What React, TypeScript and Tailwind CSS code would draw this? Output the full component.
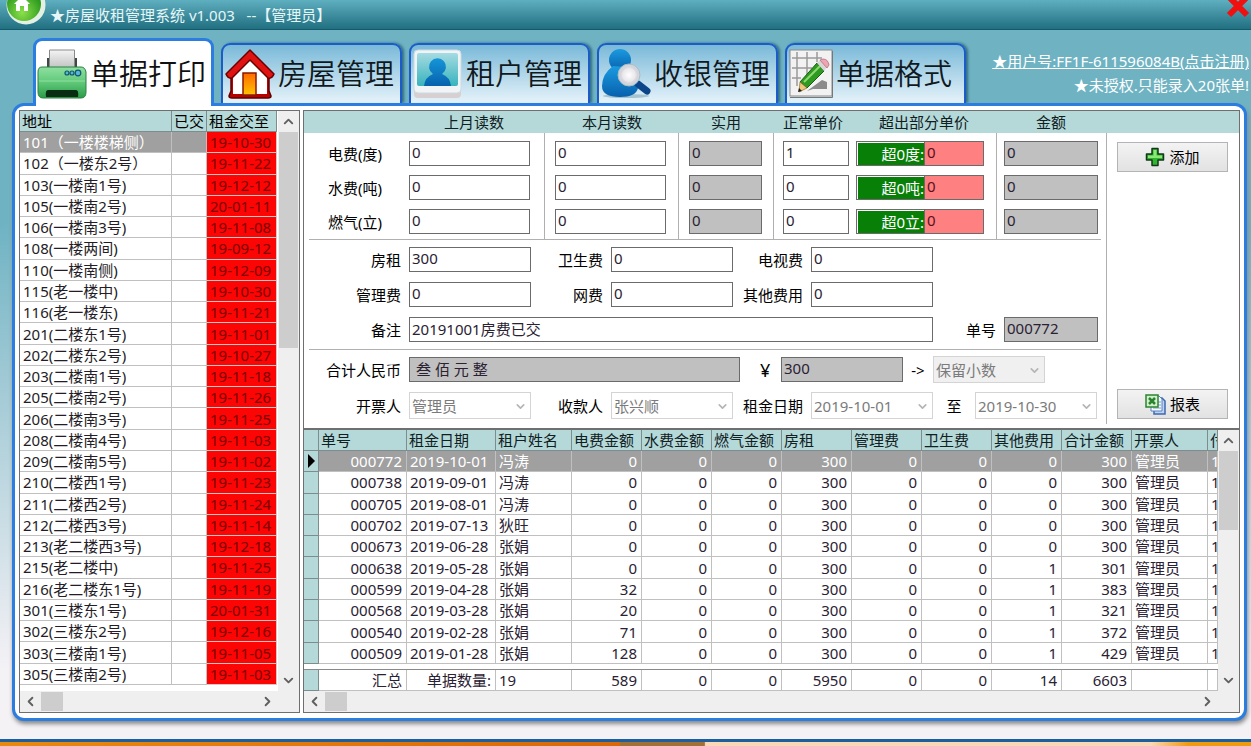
import React from "react";
import { ChevronDown, ChevronLeft, ChevronRight, ChevronUp } from "lucide-react";

const FIELD =
  "h-[25px] border border-[#6b6b6b] px-[2px] pb-[3px] text-[15px] leading-5 outline-none min-w-0";
const WHITE = FIELD + " bg-white text-[#2a2233]";
const GREY = FIELD + " bg-[#c0c0c0] text-[#2a2233]";
const PINK = FIELD + " bg-[#ff8080] text-[#5a1020]";

const rooms: [string, string][] = [
  ["101（一楼楼梯侧）", "19-10-30"],
  ["102（一楼东2号）", "19-11-22"],
  ["103(一楼南1号)", "19-12-12"],
  ["105(一楼南2号)", "20-01-11"],
  ["106(一楼南3号)", "19-11-08"],
  ["108(一楼两间)", "19-09-12"],
  ["110(一楼南侧)", "19-12-09"],
  ["115(老一楼中)", "19-10-30"],
  ["116(老一楼东)", "19-11-21"],
  ["201(二楼东1号)", "19-11-01"],
  ["202(二楼东2号)", "19-10-27"],
  ["203(二楼南1号)", "19-11-18"],
  ["205(二楼南2号)", "19-11-26"],
  ["206(二楼南3号)", "19-11-25"],
  ["208(二楼南4号)", "19-11-03"],
  ["209(二楼南5号)", "19-11-02"],
  ["210(二楼西1号)", "19-11-23"],
  ["211(二楼西2号)", "19-11-24"],
  ["212(二楼西3号)", "19-11-14"],
  ["213(老二楼西3号)", "19-12-18"],
  ["215(老二楼中)", "19-11-25"],
  ["216(老二楼东1号)", "19-11-19"],
  ["301(三楼东1号)", "20-01-31"],
  ["302(三楼东2号)", "19-12-16"],
  ["303(三楼南1号)", "19-11-05"],
  ["305(三楼南2号)", "19-11-03"],
];

const bills: [string, string, string, string, string, string][] = [
  ["000772", "2019-10-01", "冯涛", "0", "0", "300"],
  ["000738", "2019-09-01", "冯涛", "0", "0", "300"],
  ["000705", "2019-08-01", "冯涛", "0", "0", "300"],
  ["000702", "2019-07-13", "狄旺", "0", "0", "300"],
  ["000673", "2019-06-28", "张娟", "0", "0", "300"],
  ["000638", "2019-05-28", "张娟", "0", "1", "301"],
  ["000599", "2019-04-28", "张娟", "32", "1", "383"],
  ["000568", "2019-03-28", "张娟", "20", "1", "321"],
  ["000540", "2019-02-28", "张娟", "71", "1", "372"],
  ["000509", "2019-01-28", "张娟", "128", "1", "429"],
];

const billColumns = [
  "单号", "租金日期", "租户姓名", "电费金额", "水费金额", "燃气金额", "房租",
  "管理费", "卫生费", "其他费用", "合计金额", "开票人", "付款",
];

function PrinterIcon() {
  return (
    <svg width="50" height="50" viewBox="0 0 50 50" aria-hidden="true">
      <defs>
        <linearGradient id="pr-body" x1="0" y1="0" x2="0" y2="1">
          <stop offset="0" stopColor="#8fe0a0" />
          <stop offset=".5" stopColor="#5fc878" />
          <stop offset="1" stopColor="#2a9c48" />
        </linearGradient>
        <linearGradient id="pr-paper" x1="0" y1="0" x2="0" y2="1">
          <stop offset="0" stopColor="#f4f4f4" />
          <stop offset="1" stopColor="#bdbdbd" />
        </linearGradient>
      </defs>
      <path d="M11 20V10h2M39 20V10h-2" fill="none" stroke="#3c4a42" strokeWidth="2" />
      <path d="M12.500 1h25v20h-25z" fill="url(#pr-paper)" stroke="#8a8a8a" />
      <path d="M5 18h39q4 0 5 5v20q0 6-5 6H6q-5 0-5-6V23q0-5 4-5z" fill="url(#pr-body)" stroke="#2b8044" />
      <path d="M2 32h46" fill="none" stroke="#8fe09f" strokeWidth="1" />
      <path d="M11 41h28q3 0 2 7H9q-1-7 2-7z" fill="#082d12" />
      <g fill="#54b7d8" stroke="#14566e" strokeWidth="1.2">
        <circle cx="30" cy="24" r="2" />
        <circle cx="35" cy="24" r="2" />
        <circle cx="41" cy="24" r="2.800" />
      </g>
    </svg>
  );
}

function HouseIcon() {
  return (
    <svg width="50" height="50" viewBox="0 0 50 50" aria-hidden="true">
      <defs>
        <linearGradient id="ho-door" x1="0" y1="0" x2="0" y2="1">
          <stop offset="0" stopColor="#ff6a00" />
          <stop offset="1" stopColor="#ffc400" />
        </linearGradient>
      </defs>
      <path d="M6 25v17l-2 5q0 2 3 2h36q3 0 3-2l-2-5V25L25 8z" fill="#b80000" stroke="#5e0000" strokeWidth="1.500" />
      <path d="M8 26v19h34V26L25 11z" fill="#fff" />
      <path d="M25 1L1 25q2 5 6 4L25 11l18 18q4 1 6-4z" fill="#e01212" stroke="#6a0000" strokeWidth="1.500" strokeLinejoin="round" />
      <path d="M18 46V24h13v22z" fill="url(#ho-door)" stroke="#8a1a00" strokeWidth="1.500" />
    </svg>
  );
}

function TenantIcon() {
  return (
    <svg width="50" height="50" viewBox="0 0 50 50" aria-hidden="true">
      <defs>
        <linearGradient id="te-bg" x1="0" y1="0" x2="0" y2="1">
          <stop offset="0" stopColor="#a6dbe2" />
          <stop offset="1" stopColor="#36b3bc" />
        </linearGradient>
        <linearGradient id="te-man" x1="0" y1="0" x2="0" y2="1">
          <stop offset="0" stopColor="#1695d8" />
          <stop offset="1" stopColor="#0562ad" />
        </linearGradient>
      </defs>
      <path d="M1 40h47v5q0 4-4 4H5q-4 0-4-4z" fill="#d8cfd0" />
      <rect x="1" y="1" width="47" height="43" rx="4" fill="#f1f4f6" stroke="#c9dbe2" />
      <rect x="4" y="4" width="41" height="33" rx="2" fill="url(#te-bg)" />
      <path d="M11 37q1-9 9-12a8.500 8.500 0 1 1 9 0q8 3 9 12z" fill="url(#te-man)" />
    </svg>
  );
}

function CashierIcon() {
  return (
    <svg width="50" height="50" viewBox="0 0 50 50" aria-hidden="true">
      <defs>
        <linearGradient id="ca-man" x1="0" y1="0" x2="0" y2="1">
          <stop offset="0" stopColor="#1a9be0" />
          <stop offset="1" stopColor="#0860ad" />
        </linearGradient>
        <radialGradient id="ca-lens">
          <stop offset="0" stopColor="#fff" />
          <stop offset="1" stopColor="#e4e4ea" />
        </radialGradient>
      </defs>
      <ellipse cx="25" cy="47" rx="23" ry="2" fill="#a4c4d0" />
      <circle cx="19" cy="11" r="11" fill="url(#ca-man)" />
      <path d="M12 17Q1 25 1 37q0 11 18 11 16 0 18-9L25 18z" fill="url(#ca-man)" />
      <path d="M37 35l9 7" stroke="#0b458a" strokeWidth="7" strokeLinecap="round" />
      <circle cx="28" cy="26" r="11" fill="#cfd6de" stroke="#aebbc4" />
      <circle cx="28" cy="26" r="7.500" fill="url(#ca-lens)" stroke="#e8d9d9" />
    </svg>
  );
}

function FormatIcon() {
  return (
    <svg width="44" height="50" viewBox="0 0 44 50" aria-hidden="true">
      <rect x="1" y="1" width="42" height="46" fill="#f2f2f2" stroke="#8a8a8a" />
      <path d="M1 48.500h42.500V2" fill="none" stroke="#777" />
      <path d="M8 3v34M18 3v26M28 3v10M3 9h30M3 19h20M3 29h9" stroke="#9a9a9a" strokeWidth="1.500" />
      <path d="M18 42l15-11 5 2v7H24z" fill="#8b8b8b" />
      <path d="M11 33L28 14l7 8-17 17z" fill="#2f9a22" stroke="#1b5d12" />
      <path d="M15 33l16-16" stroke="#8ddb6e" strokeWidth="2" />
      <path d="M28 14l3-3 7 7-3 4z" fill="#d6d6d6" />
      <path d="M31 11l3-1q5 0 6 6l-2 3z" fill="#efa5b1" stroke="#b4707c" strokeWidth=".8" />
      <path d="M11 33l7 6-8 4z" fill="#eec77b" stroke="#8a6a2a" strokeWidth=".7" />
      <path d="M9 43l1-4 3 3z" fill="#222" />
    </svg>
  );
}

function HomeBadge() {
  return (
    <svg width="42" height="26" viewBox="0 0 42 26" aria-hidden="true">
      <defs>
        <radialGradient id="hb" cx=".45" cy=".75" r=".6">
          <stop offset="0" stopColor="#8de04a" />
          <stop offset="1" stopColor="#2c9a1e" />
        </radialGradient>
      </defs>
      <circle cx="20" cy="5" r="19.500" fill="#e4f0e4" />
      <circle cx="18" cy="4" r="17" fill="url(#hb)" />
      <path d="M8 4L16-4l8 8h-2v7h-4V6h-4v5h-4V4z" fill="#fff" />
    </svg>
  );
}

function PlusIcon() {
  return (
    <svg width="20" height="20" viewBox="0 0 20 20" aria-hidden="true">
      <path d="M7 1.500h6V7h5.500v6H13v5.500H7V13H1.500V7H7z" fill="#2fb52f" stroke="#14361a" strokeWidth="1.500" strokeLinejoin="round" />
      <path d="M8.500 3h3v5.500H17v2.500H3V8.500h5.500z" fill="#8bea75" />
    </svg>
  );
}

function SheetIcon() {
  return (
    <svg width="21" height="21" viewBox="0 0 21 21" aria-hidden="true">
      <path d="M9 4h8l3 3v13H9z" fill="#bcd3f6" stroke="#3f68ad" strokeWidth="1.500" />
      <path d="M6 2h8l3 3v12H6z" fill="#f6faff" stroke="#5a82be" />
      <path d="M13 8h3M13 11h3M8 14h8" stroke="#7b9ed6" />
      <rect x="1" y="1" width="12" height="12" fill="#d3efcd" stroke="#2c8432" strokeWidth="1.500" />
      <path d="M4 4l6 6M10 4l-6 6" stroke="#27832c" strokeWidth="2.500" />
    </svg>
  );
}

function Tab({ label, icon }: { label: string; icon: React.ReactNode }) {
  return (
    <button
      type="button"
      role="tab"
      aria-selected="false"
      className="flex h-[60px] w-[181px] items-center gap-[3px] rounded-t-[9px] border-2 border-b-0 border-[#1b5cc8] bg-gradient-to-b from-[#79b9d8] to-[#e6f3fa] pl-[2px] text-[29px] leading-[36px] font-[350] whitespace-nowrap text-[#101820] shadow-[2px_0_3px_#2f6b80]"
    >
      {icon}
      {label}
    </button>
  );
}

function VScroll({ thumb }: { thumb: string }) {
  return (
    <div className="flex w-[21px] shrink-0 flex-col items-center bg-[#efefef] text-[#606060]">
      <button type="button" aria-label="向上" className="flex h-[21px] items-center">
        <ChevronUp size={15} strokeWidth={3} />
      </button>
      <div className={"w-[19px] bg-[#cdcdcd] " + thumb} />
      <button type="button" aria-label="向下" className="mt-auto flex h-[21px] items-center">
        <ChevronDown size={15} strokeWidth={3} />
      </button>
    </div>
  );
}

function HScroll() {
  return (
    <div className="flex h-[21px] items-center bg-[#efefef] pr-[22px] text-[#606060]">
      <button type="button" aria-label="向左" className="flex w-[21px] justify-center">
        <ChevronLeft size={15} strokeWidth={3} />
      </button>
      <div className="h-[19px] w-[22px] bg-[#cdcdcd]" />
      <button type="button" aria-label="向右" className="ml-auto flex w-[20px] justify-center">
        <ChevronRight size={15} strokeWidth={3} />
      </button>
    </div>
  );
}

function Combo({ id, value, look }: { id: string; value: string; look: string }) {
  return (
    <div className={"relative " + look}>
      <select
        id={id}
        aria-label={value}
        disabled
        className="h-[27px] w-full appearance-none border border-[#d4d4d4] bg-transparent pr-5 pl-[2px] text-[15px] leading-5 text-[#7b7b7b] opacity-100"
      >
        <option>{value}</option>
      </select>
      <ChevronDown size={13} strokeWidth={3} className="pointer-events-none absolute top-[8px] right-[4px] text-[#b5b5b5]" />
    </div>
  );
}

function Money({ id, label, value, labelWidth }: { id: string; label: string; value: string; labelWidth: string }) {
  return (
    <div className="flex items-center gap-[8px]">
      <label htmlFor={id} className={"text-right " + labelWidth}>{label}</label>
      <input id={id} defaultValue={value} className={WHITE + " w-[122px]"} />
    </div>
  );
}

function RoomList() {
  return (
    <section className="flex w-[281px] shrink-0 flex-col border border-[#6f6f6f] bg-white">
      <div className="flex flex-1">
        <div className="flex-1">
          <table className="h-[574px] w-[257px] table-fixed border-separate border-spacing-0 text-left">
            <colgroup>
              <col className="w-[152px]" />
              <col className="w-[35px]" />
              <col className="w-[70px]" />
            </colgroup>
            <thead>
              <tr className="bg-[#b5d9d9]">
                {["地址", "已交", "租金交至"].map((h) => (
                  <th key={h} className="h-[21px] border-r border-b border-[#7d8c8c] p-0 pl-[2px] leading-5 font-normal whitespace-nowrap text-black">{h}</th>
                ))}
              </tr>
            </thead>
            <tbody>
              {rooms.map(([name, date], i) => (
                <tr key={name} className={i === 0 ? "bg-[#a0a0a0] text-white" : "text-[#241c26]"}>
                  <td className="border-r border-b border-[#c0c0c0] p-0 pl-[3px] leading-5 whitespace-nowrap">{name}</td>
                  <td className="border-r border-b border-[#c0c0c0] p-0" />
                  <td className="border-r border-b border-[#d8c8c8] bg-[#fb0505] p-0 pl-[3px] leading-5 whitespace-nowrap text-[#7b0000]">{date}</td>
                </tr>
              ))}
            </tbody>
          </table>
        </div>
        <VScroll thumb="h-[216px]" />
      </div>
      <HScroll />
    </section>
  );
}

function Meters() {
  const rows = [
    { k: "e", label: "电费(度)", over: "超0度:", price: "1" },
    { k: "w", label: "水费(吨)", over: "超0吨:", price: "0" },
    { k: "g", label: "燃气(立)", over: "超0立:", price: "0" },
  ];
  const col = "flex flex-col gap-[9px] pt-[8px] h-[106px]";
  return (
    <div className="flex">
      <div className={col + " w-[241px] border-r border-[#b0b0b0]"}>
        {rows.map((r) => (
          <div key={r.k} className="flex items-center">
            <label htmlFor={"last-" + r.k} className="w-[105px] pl-[24px]">{r.label}</label>
            <input id={"last-" + r.k} defaultValue="0" className={WHITE + " w-[121px]"} />
          </div>
        ))}
      </div>
      <div className={col + " w-[134px] border-r border-[#b0b0b0] pl-[10px]"}>
        {rows.map((r) => (
          <input key={r.k} aria-label={r.label + "本月读数"} defaultValue="0" className={WHITE + " w-[111px]"} />
        ))}
      </div>
      <div className={col + " w-[95px] border-r border-[#b0b0b0] pl-[10px]"}>
        {rows.map((r) => (
          <input key={r.k} aria-label={r.label + "实用"} readOnly value="0" className={GREY + " w-[73px]"} />
        ))}
      </div>
      <div className={col + " w-[223px] border-r border-[#b0b0b0] pl-[9px]"}>
        {rows.map((r) => (
          <div key={r.k} className="flex">
            <input aria-label={r.label + "正常单价"} defaultValue={r.price} className={WHITE + " w-[66px]"} />
            <label
              htmlFor={"over-" + r.k}
              className="ml-[7px] h-[25px] w-[68px] border border-r-0 border-[#6b6b6b] bg-[#088008] text-right leading-[24px] text-white shadow-[inset_1px_1px_0_#fff]"
            >
              {r.over}
            </label>
            <input id={"over-" + r.k} defaultValue="0" className={PINK + " w-[60px]"} />
          </div>
        ))}
      </div>
      <div className={col + " pl-[7px]"}>
        {rows.map((r) => (
          <input key={r.k} aria-label={r.label + "金额"} readOnly value="0" className={GREY + " w-[94px]"} />
        ))}
      </div>
    </div>
  );
}

function BillForm() {
  return (
    <div>
      <div className="flex h-[22px] items-center bg-[#b5d9d9] pl-[105px] text-center leading-5 whitespace-nowrap text-[#10201f]">
        <span className="w-[130px]">上月读数</span>
        <span className="w-[146px]">本月读数</span>
        <span className="w-[82px]">实用</span>
        <span className="w-[92px]">正常单价</span>
        <span className="w-[130px]">超出部分单价</span>
        <span className="w-[124px]">金额</span>
      </div>
      <div className="flex h-[295px] pb-[4px]">
        <div className="w-[803px] shrink-0 border-r border-[#b0b0b0]">
          <Meters />
          <div className="mr-[5px] ml-[5px] flex flex-col gap-[10px] border-t border-[#b0b0b0] py-[7px]">
            <div className="flex items-center">
              <Money id="rent" label="房租" value="300" labelWidth="w-[92px]" />
              <Money id="clean" label="卫生费" value="0" labelWidth="w-[72px]" />
              <Money id="tv" label="电视费" value="0" labelWidth="w-[70px]" />
            </div>
            <div className="flex items-center">
              <Money id="manage" label="管理费" value="0" labelWidth="w-[92px]" />
              <Money id="net" label="网费" value="0" labelWidth="w-[72px]" />
              <Money id="other" label="其他费用" value="0" labelWidth="w-[70px]" />
            </div>
            <div className="flex items-center gap-[8px]">
              <label htmlFor="note" className="w-[92px] text-right">备注</label>
              <input id="note" defaultValue="20191001房费已交" className={WHITE + " w-[524px]"} />
              <label htmlFor="bill-no" className="w-[55px] text-right">单号</label>
              <input id="bill-no" readOnly value="000772" className={GREY + " w-[94px]"} />
            </div>
          </div>
          <div className="mr-[5px] ml-[5px] flex flex-col gap-[9px] border-t border-[#b0b0b0] pt-[6px]">
            <div className="flex items-center">
              <label htmlFor="total-cn" className="w-[92px] text-right">合计人民币</label>
              <input id="total-cn" readOnly value="叁 佰 元 整" className={GREY + " ml-[8px] w-[331px] pl-[6px]"} />
              <label htmlFor="total" className="w-[41px] pl-[20px] text-[18px]">¥</label>
              <input id="total" readOnly value="300" className={GREY + " w-[122px]"} />
              <span className="w-[30px] text-center">-&gt;</span>
              <Combo id="round" value="保留小数" look="w-[112px] bg-[#f0f0f0]" />
            </div>
            <div className="flex items-center">
              <label htmlFor="drawer" className="mr-[8px] w-[92px] text-right">开票人</label>
              <Combo id="drawer" value="管理员" look="w-[122px]" />
              <label htmlFor="payee" className="mr-[8px] w-[72px] text-right">收款人</label>
              <Combo id="payee" value="张兴顺" look="w-[122px]" />
              <label htmlFor="from" className="mr-[8px] w-[70px] text-right">租金日期</label>
              <Combo id="from" value="2019-10-01" look="w-[122px]" />
              <label htmlFor="to" className="w-[42px] text-center">至</label>
              <Combo id="to" value="2019-10-30" look="w-[122px]" />
            </div>
          </div>
        </div>
        <div className="flex flex-1 flex-col items-start justify-between pt-[9px] pb-[5px] pl-[10px]">
          <button type="button" className="flex h-[30px] w-[111px] items-center justify-center gap-[4px] border border-[#b4b4b4] bg-gradient-to-b from-[#f3f3f3] to-[#e2e2e2]">
            <PlusIcon />添加
          </button>
          <button type="button" className="flex h-[30px] w-[111px] items-center justify-center gap-[4px] border border-[#b4b4b4] bg-gradient-to-b from-[#f3f3f3] to-[#e2e2e2]">
            <SheetIcon />报表
          </button>
        </div>
      </div>
    </div>
  );
}

function BillTable() {
  const cell = "border-r border-b border-[#c0c0c0] p-0 leading-5 whitespace-nowrap overflow-hidden";
  const left = cell + " pl-[3px]";
  const right = cell + " pr-[4px] text-right";
  const cols = (
    <colgroup>
      <col className="w-[15px]" />
      <col className="w-[88px]" />
      <col className="w-[89px]" />
      <col className="w-[76px]" />
      <col className="w-[70px]" />
      <col className="w-[70px]" />
      <col className="w-[70px]" />
      <col className="w-[70px]" />
      <col className="w-[70px]" />
      <col className="w-[70px]" />
      <col className="w-[70px]" />
      <col className="w-[70px]" />
      <col className="w-[76px]" />
      <col />
    </colgroup>
  );
  return (
    <div className="flex flex-1 border-t-2 border-[#6f6f6f]">
      <div className="min-w-0 flex-1">
        <table className="h-[234px] w-full table-fixed border-separate border-spacing-0 text-left">
          {cols}
          <thead>
            <tr className="bg-[#b5d9d9]">
              <td className="h-[21px] border-r border-b border-[#7d8c8c] p-0" />
              {billColumns.map((h) => (
                <th key={h} className="h-[21px] overflow-hidden border-r border-b border-[#7d8c8c] p-0 pl-[2px] leading-5 font-normal whitespace-nowrap text-[#10201f]">{h}</th>
              ))}
            </tr>
          </thead>
          <tbody>
            {bills.map(([no, date, name, power, other, total], i) => (
              <tr key={no} className={i === 0 ? "bg-[#a0a0a0] text-white" : "text-[#2a2233]"}>
                <td className="border-r border-b border-[#7d8c8c] bg-[#b5d9d9] p-0">
                  {i === 0 && (
                    <svg width="14" height="14" viewBox="0 0 14 14" className="block" aria-hidden="true">
                      <path d="M4 0l7 7-7 7z" fill="#000" />
                    </svg>
                  )}
                </td>
                <td className={right}>{no}</td>
                <td className={left}>{date}</td>
                <td className={left}>{name}</td>
                <td className={right}>{power}</td>
                <td className={right}>0</td>
                <td className={right}>0</td>
                <td className={right}>300</td>
                <td className={right}>0</td>
                <td className={right}>0</td>
                <td className={right}>{other}</td>
                <td className={right}>{total}</td>
                <td className={left}>管理员</td>
                <td className={left}>19</td>
              </tr>
            ))}
          </tbody>
        </table>
        <table className="mt-[5px] h-[22px] w-full table-fixed border-separate border-spacing-0 border-t border-[#8a8a8a] text-left text-[#2a2233]">
          {cols}
          <tbody>
            <tr>
              <td className="border-r border-b border-[#7d8c8c] bg-[#b5d9d9] p-0" />
              <td className={right}>汇总</td>
              <td className={right}>单据数量:</td>
              <td className={left}>19</td>
              {["589", "0", "0", "5950", "0", "0", "14", "6603"].map((v, i) => (
                <td key={i} className={right}>{v}</td>
              ))}
              <td className={cell} />
              <td className={cell} />
            </tr>
          </tbody>
        </table>
      </div>
      <VScroll thumb="h-[79px]" />
    </div>
  );
}

export default function App() {
  return (
    <div className="flex min-h-screen flex-col overflow-hidden bg-gradient-to-b from-[#6fb3c3] from-30% to-[#f5f2f6] to-90% font-['Noto_Sans','Noto_Sans_CJK_SC',sans-serif] text-[15px] leading-5 text-black">
      <header className="flex h-[30px] items-center border-b border-[#17586a] bg-gradient-to-b from-[#5eafbf] to-[#1f7082] pl-[6px] text-[#e6f6f8]">
        <div className="self-start">
          <HomeBadge />
        </div>
        <h1 className="ml-[2px] whitespace-pre">★房屋收租管理系统 v1.003   --【管理员】</h1>
        <button type="button" aria-label="关闭" className="ml-auto self-start">
          <svg width="26" height="20" viewBox="0 0 26 20" className="block" aria-hidden="true">
            <path d="M4 -3L22 15M22 -3L4 15" stroke="#f01010" strokeWidth="6" />
          </svg>
        </button>
      </header>

      <div className="flex items-end pl-[33px]">
        <nav role="tablist" className="flex items-end gap-[7px] pt-[8px]">
          <button
            type="button"
            role="tab"
            aria-selected="true"
            className="z-10 -mb-[3px] flex h-[68px] w-[181px] items-center gap-[3px] rounded-t-[9px] border-[3px] border-b-0 border-[#2b7de0] bg-white pl-[1px] text-[29px] leading-[36px] font-[350] whitespace-nowrap text-[#101010]"
          >
            <PrinterIcon />
            单据打印
          </button>
          <Tab label="房屋管理" icon={<HouseIcon />} />
          <Tab label="租户管理" icon={<TenantIcon />} />
          <Tab label="收银管理" icon={<CashierIcon />} />
          <Tab label="单据格式" icon={<FormatIcon />} />
        </nav>
        <div className="ml-auto flex flex-col items-end gap-[4px] pr-[2px] pb-[8px] whitespace-nowrap text-white">
          <a href="#register" className="underline">★用户号:FF1F-611596084B(点击注册)</a>
          <span>★未授权.只能录入20张单!</span>
        </div>
      </div>

      <main className="mr-[4px] ml-[12px] flex gap-[3px] rounded-[12px] border-[3px] border-[#2b7de0] bg-white px-[4px] pt-[4px] pb-[5px] shadow-[1px_3px_4px_#888]">
        <RoomList />
        <section className="flex min-w-0 flex-1 flex-col border border-[#6f6f6f] bg-white">
          <BillForm />
          <BillTable />
          <HScroll />
        </section>
      </main>

      <footer className="mt-auto h-[7px] border-t-[3px] border-[#1d5f9c] bg-[linear-gradient(to_right,#e8890f_0%,#d96808_49.6%,#a07035_49.6%,#a07035_56.3%,#fbd8b5_56.4%,#fbd8b5_92%,#f09a10_95%)]" />
    </div>
  );
}
